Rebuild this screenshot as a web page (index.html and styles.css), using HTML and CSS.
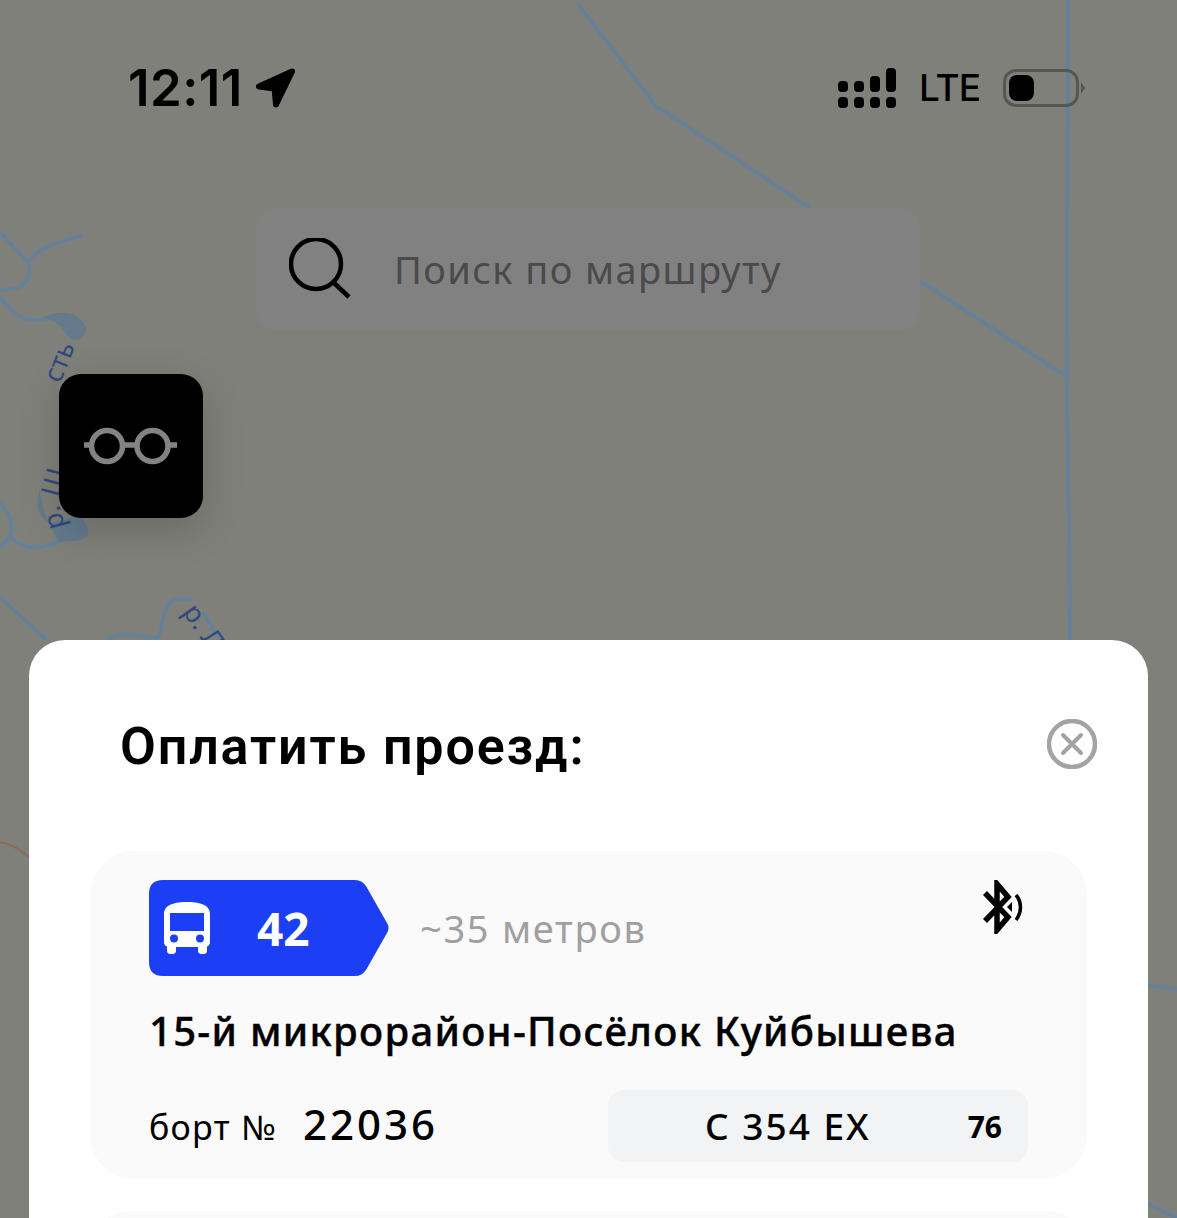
FILE: index.html
```html
<!DOCTYPE html>
<html lang="ru">
<head>
  <meta charset="UTF-8" />
  <meta name="viewport" content="width=device-width, initial-scale=1.0"/>
  <title>Оплатить проезд</title>
  <link rel="stylesheet" href="styles.css">
</head>
<body>
  <div class="screen">
    <svg class="map" width="1177" height="1218" viewBox="0 0 1177 1218" fill="none">
      <g class="river">
        <path d="M578 4L656 106L810 208"/>
        <path d="M920 281L1067 377"/>
        <path d="M1068 0L1067 377L1070 640"/>
        <path d="M0 232L28 262C36 250 50 244 83 235"/>
        <path d="M28 262C32 280 26 290 0 290"/>
        <path d="M0 297C14 315 22 320 37 320C45 320 52 316 60 314"/>
        <path d="M0 502C10 515 15 525 10 537C25 552 45 548 62 540"/>
        <path d="M0 547L10 537"/>
        <path d="M0 597C15 612 30 625 47 640"/>
        <path d="M107 640C120 630 140 636 157 638C164 630 160 612 170 602C178 598 186 598 192 600"/>
        <path d="M203 612L217 637"/>
        <path d="M1148 985L1177 989"/>
        <path d="M1148 1204L1177 1218"/>
      </g>
      <path class="road" d="M0 842C12 844 20 850 29 857"/>
      <path class="lake" d="M43 317C55 312 72 311 79 318C87 324 88 332 82 338C76 342 70 340 66 334C62 326 55 320 43 318Z"/>
      <path class="lake" d="M40 490C36 500 36 512 44 519C52 526 62 520 72 517C84 516 90 526 88 534C84 542 70 541 58 542L50 525C45 515 42 505 40 490Z"/>
      <g class="map-label">
        <text transform="translate(60 384) rotate(-68)">сть</text>
        <text transform="translate(65 527) rotate(-105)">р.</text>
        <text transform="translate(59 498) rotate(-75)">Ш</text>
        <text transform="translate(182 612) rotate(55)">р. Л</text>
      </g>
    </svg>

    <header class="status-bar">
      <div class="status-left">
        <span class="clock">12:11</span>
        <svg class="location" width="40" height="40" viewBox="0 0 40 40">
          <path d="M37 3.500L4 18.500L19.500 20.500L21 36.500Z"/>
        </svg>
      </div>
      <div class="status-right">
        <div class="signal">
          <div class="signal-col"><i class="dot"></i><i class="dot"></i></div>
          <div class="signal-col"><i class="dot"></i><i class="dot"></i></div>
          <div class="signal-col"><i class="dot tall"></i><i class="dot"></i></div>
          <div class="signal-col"><i class="dot taller"></i><i class="dot"></i></div>
        </div>
        <span class="lte">LTE</span>
        <div class="battery"><div class="battery-fill"></div></div>
        <div class="battery-tip"></div>
      </div>
    </header>

    <div class="search">
      <svg class="search-icon" width="62" height="62" viewBox="0 0 62 62" fill="none">
        <circle cx="27" cy="26" r="25"/>
        <path d="M44 44L60 59"/>
      </svg>
      <span class="search-text">Поиск по маршруту</span>
    </div>

    <button class="glasses-btn">
      <svg width="94" height="38" viewBox="0 0 94 38" fill="none">
        <circle cx="23" cy="19" r="15.500"/>
        <circle cx="68.500" cy="19" r="15.500"/>
        <path d="M0 18H7M38 18H54M84 18H93"/>
      </svg>
    </button>

    <section class="sheet">
      <div class="sheet-head">
        <h2>Оплатить проезд:</h2>
        <svg class="close" width="50" height="50" viewBox="0 0 50 50" fill="none">
          <circle cx="25" cy="25" r="23"/>
          <path d="M16 16L34 34M34 16L16 34"/>
        </svg>
      </div>

      <div class="card">
        <div class="card-top">
          <div class="route-tag">
            <svg class="bus" width="46" height="52" viewBox="0 0 46 52">
              <path d="M23 0C34 0 46 2 46 12V40C46 42.5 44.5 44 43 44.6V49C43 50.6 41.6 52 40 52H37C35.400 52 34 50.6 34 49V45H12V49C12 50.600 10.600 52 9 52H6C4.400 52 3 50.600 3 49V44.600C1.500 44 0 42.500 0 40V12C0 2 12 0 23 0ZM6 11V29H40V11ZM10 32.500A4 4 0 1 0 10 40.500A4 4 0 1 0 10 32.500ZM36 32.500A4 4 0 1 0 36 40.500A4 4 0 1 0 36 32.500Z" fill-rule="evenodd"/>
            </svg>
            <span class="route-num">42</span>
          </div>
          <span class="distance">~35 метров</span>
          <svg class="bluetooth" width="44" height="54" viewBox="0 0 44 54" fill="none">
            <path class="bt-line" d="M4 13L27 37L16 50V4L27 17L4 41"/>
            <path class="bt-fill" d="M26 27L31 22V32Z"/>
            <path class="bt-line thin" d="M35 15C41 22 41 32 35 40"/>
          </svg>
        </div>
        <div class="route-name">15-й микрорайон-Посёлок Куйбышева</div>
        <div class="card-bottom">
          <div class="board">
            <span class="board-label">борт №</span>
            <span class="board-num">22036</span>
          </div>
          <div class="plate">
            <span class="plate-num">С 354 ЕХ</span>
            <span class="plate-region">76</span>
          </div>
        </div>
      </div>

      <div class="card next"></div>
    </section>
  </div>
</body>
</html>
```

FILE: styles.css
```css
* {
  box-sizing: border-box;
}

html, body {
  margin: 0;
  height: 100%;
}

body {
  font-family: 'Noto Sans', sans-serif;
  background: #80807a;
  color: #000;
  overflow: hidden;
}

.screen {
  position: relative;
  width: 1177px;
  height: 1218px;
  overflow: hidden;
  padding-top: 60px;
}

.map {
  position: absolute;
  left: 0;
  top: 0;
}

.river path {
  stroke: #668099;
  stroke-width: 4;
}

.road {
  stroke: #8a6a56;
  stroke-width: 2;
}

.lake {
  fill: #647a8c;
}

.map-label text {
  font-family: 'Noto Sans', sans-serif;
  font-size: 27px;
  fill: #2f4a7e;
}

/* status bar */
.status-bar {
  position: relative;
  display: flex;
  justify-content: space-between;
  align-items: center;
  height: 56px;
  padding: 0 92px 0 128px;
}

.status-left {
  display: flex;
  align-items: center;
  gap: 12px;
}

.clock {
  font-family: Inter, sans-serif;
  font-size: 51px;
  font-weight: 600;
  letter-spacing: 0.4px;
  line-height: 56px;
}

.location {
  fill: #000;
  stroke: #000;
  stroke-width: 6;
  stroke-linejoin: round;
}

.status-right {
  display: flex;
  align-items: center;
}

.signal {
  display: flex;
  align-items: flex-end;
  gap: 6px;
  margin-right: 23px;
}

.signal-col {
  display: flex;
  flex-direction: column;
  gap: 5px;
}

.dot {
  display: block;
  width: 10px;
  height: 11px;
  border-radius: 4px;
  background: #000;
}

.dot.tall {
  height: 16px;
}

.dot.taller {
  height: 24px;
}

.lte {
  font-family: Inter, sans-serif;
  font-size: 37px;
  font-weight: 500;
  letter-spacing: -1px;
  line-height: 42px;
  margin-right: 23px;
}

.battery {
  width: 76px;
  height: 38px;
  border: 3px solid #555552;
  border-radius: 13px;
  padding: 3px;
}

.battery-fill {
  width: 25px;
  height: 26px;
  border-radius: 8px;
  background: #000;
}

.battery-tip {
  width: 0;
  height: 0;
  margin-left: 2px;
  border-top: 6px solid transparent;
  border-bottom: 6px solid transparent;
  border-left: 4px solid #555552;
}

/* search */
.search {
  position: relative;
  display: flex;
  align-items: center;
  gap: 43px;
  width: 664px;
  height: 122px;
  margin: 92px 0 0 256px;
  padding-left: 33px;
  background: #818182;
  border-radius: 20px;
}

.search-icon circle,
.search-icon path {
  stroke: #000;
  stroke-width: 4.5;
}

.search-text {
  font-size: 38px;
  letter-spacing: 1.4px;
  color: #4a4a4a;
}

.glasses-btn {
  position: absolute;
  left: 59px;
  top: 374px;
  width: 144px;
  height: 144px;
  display: flex;
  align-items: center;
  justify-content: center;
  padding: 0;
  border: none;
  border-radius: 22px;
  background: #000;
  box-shadow: 0 12px 40px rgba(0,0,0,0.18);
}

.glasses-btn circle,
.glasses-btn path {
  stroke: #838383;
  stroke-width: 5.5;
}

/* bottom sheet */
.sheet {
  position: absolute;
  left: 29px;
  top: 640px;
  width: 1119px;
  height: 620px;
  padding: 0 61px;
  background: #fff;
  border-radius: 36px 36px 0 0;
}

.sheet-head {
  position: relative;
  height: 211px;
  padding: 76px 0 0 30px;
}

.sheet-head h2 {
  margin: 0;
  font-family: Roboto, sans-serif;
  font-size: 52px;
  font-weight: 600;
  letter-spacing: 1.85px;
  line-height: 62px;
}

.close {
  position: absolute;
  right: -10px;
  top: 79px;
}

.close circle {
  stroke: #a3a3a3;
  stroke-width: 4.5;
}

.close path {
  stroke: #a3a3a3;
  stroke-width: 4;
  stroke-linecap: round;
}

.card {
  width: 997px;
  height: 328px;
  padding: 29px 59px 0;
  background: #fafafa;
  border-radius: 44px;
}

.card.next {
  height: 80px;
  margin-top: 32px;
}

.card-top {
  position: relative;
  display: flex;
  align-items: center;
  gap: 31px;
  height: 96px;
}

.route-tag {
  display: flex;
  align-items: center;
  width: 240px;
  height: 96px;
  padding-left: 15px;
  background: #1c3ff5;
  color: #fff;
  clip-path: path('M14 0H206Q213 0 217 6L238 43Q241 48 238 53L217 90Q213 96 206 96H14Q0 96 0 82V14Q0 0 14 0Z');
}

.route-num {
  margin-left: 47px;
  font-size: 46px;
  font-weight: 700;
}

.bus {
  fill: #fff;
}

.distance {
  font-size: 38px;
  letter-spacing: 1.7px;
  color: #a0a0a0;
}

.bluetooth {
  position: absolute;
  right: 3px;
  top: 0;
}

.bt-line {
  stroke: #000;
  stroke-width: 5.5;
}

.bt-line.thin {
  stroke-width: 3.5;
}

.bt-fill {
  fill: #000;
}

.route-name {
  margin-top: 28px;
  font-size: 40px;
  font-weight: 500;
  letter-spacing: 1.3px;
  line-height: 54px;
  -webkit-text-stroke: 0.4px #000;
}

.card-bottom {
  display: flex;
  align-items: center;
  justify-content: space-between;
  margin-top: 32px;
}

.board {
  display: flex;
  align-items: baseline;
  gap: 26px;
  padding-bottom: 6px;
}

.board-label {
  font-size: 34px;
  letter-spacing: 1.3px;
}

.board-num {
  font-size: 42px;
  font-weight: 500;
  letter-spacing: 3px;
}

.plate {
  display: flex;
  align-items: center;
  width: 420px;
  height: 72px;
  padding: 0 0 2px 97px;
  background: #f2f3f5;
  border-radius: 16px;
}

.plate-num {
  font-size: 37px;
  font-weight: 500;
  letter-spacing: 2px;
}

.plate-region {
  margin: 2px 0 0 97px;
  font-size: 30px;
  font-weight: 700;
}
```
